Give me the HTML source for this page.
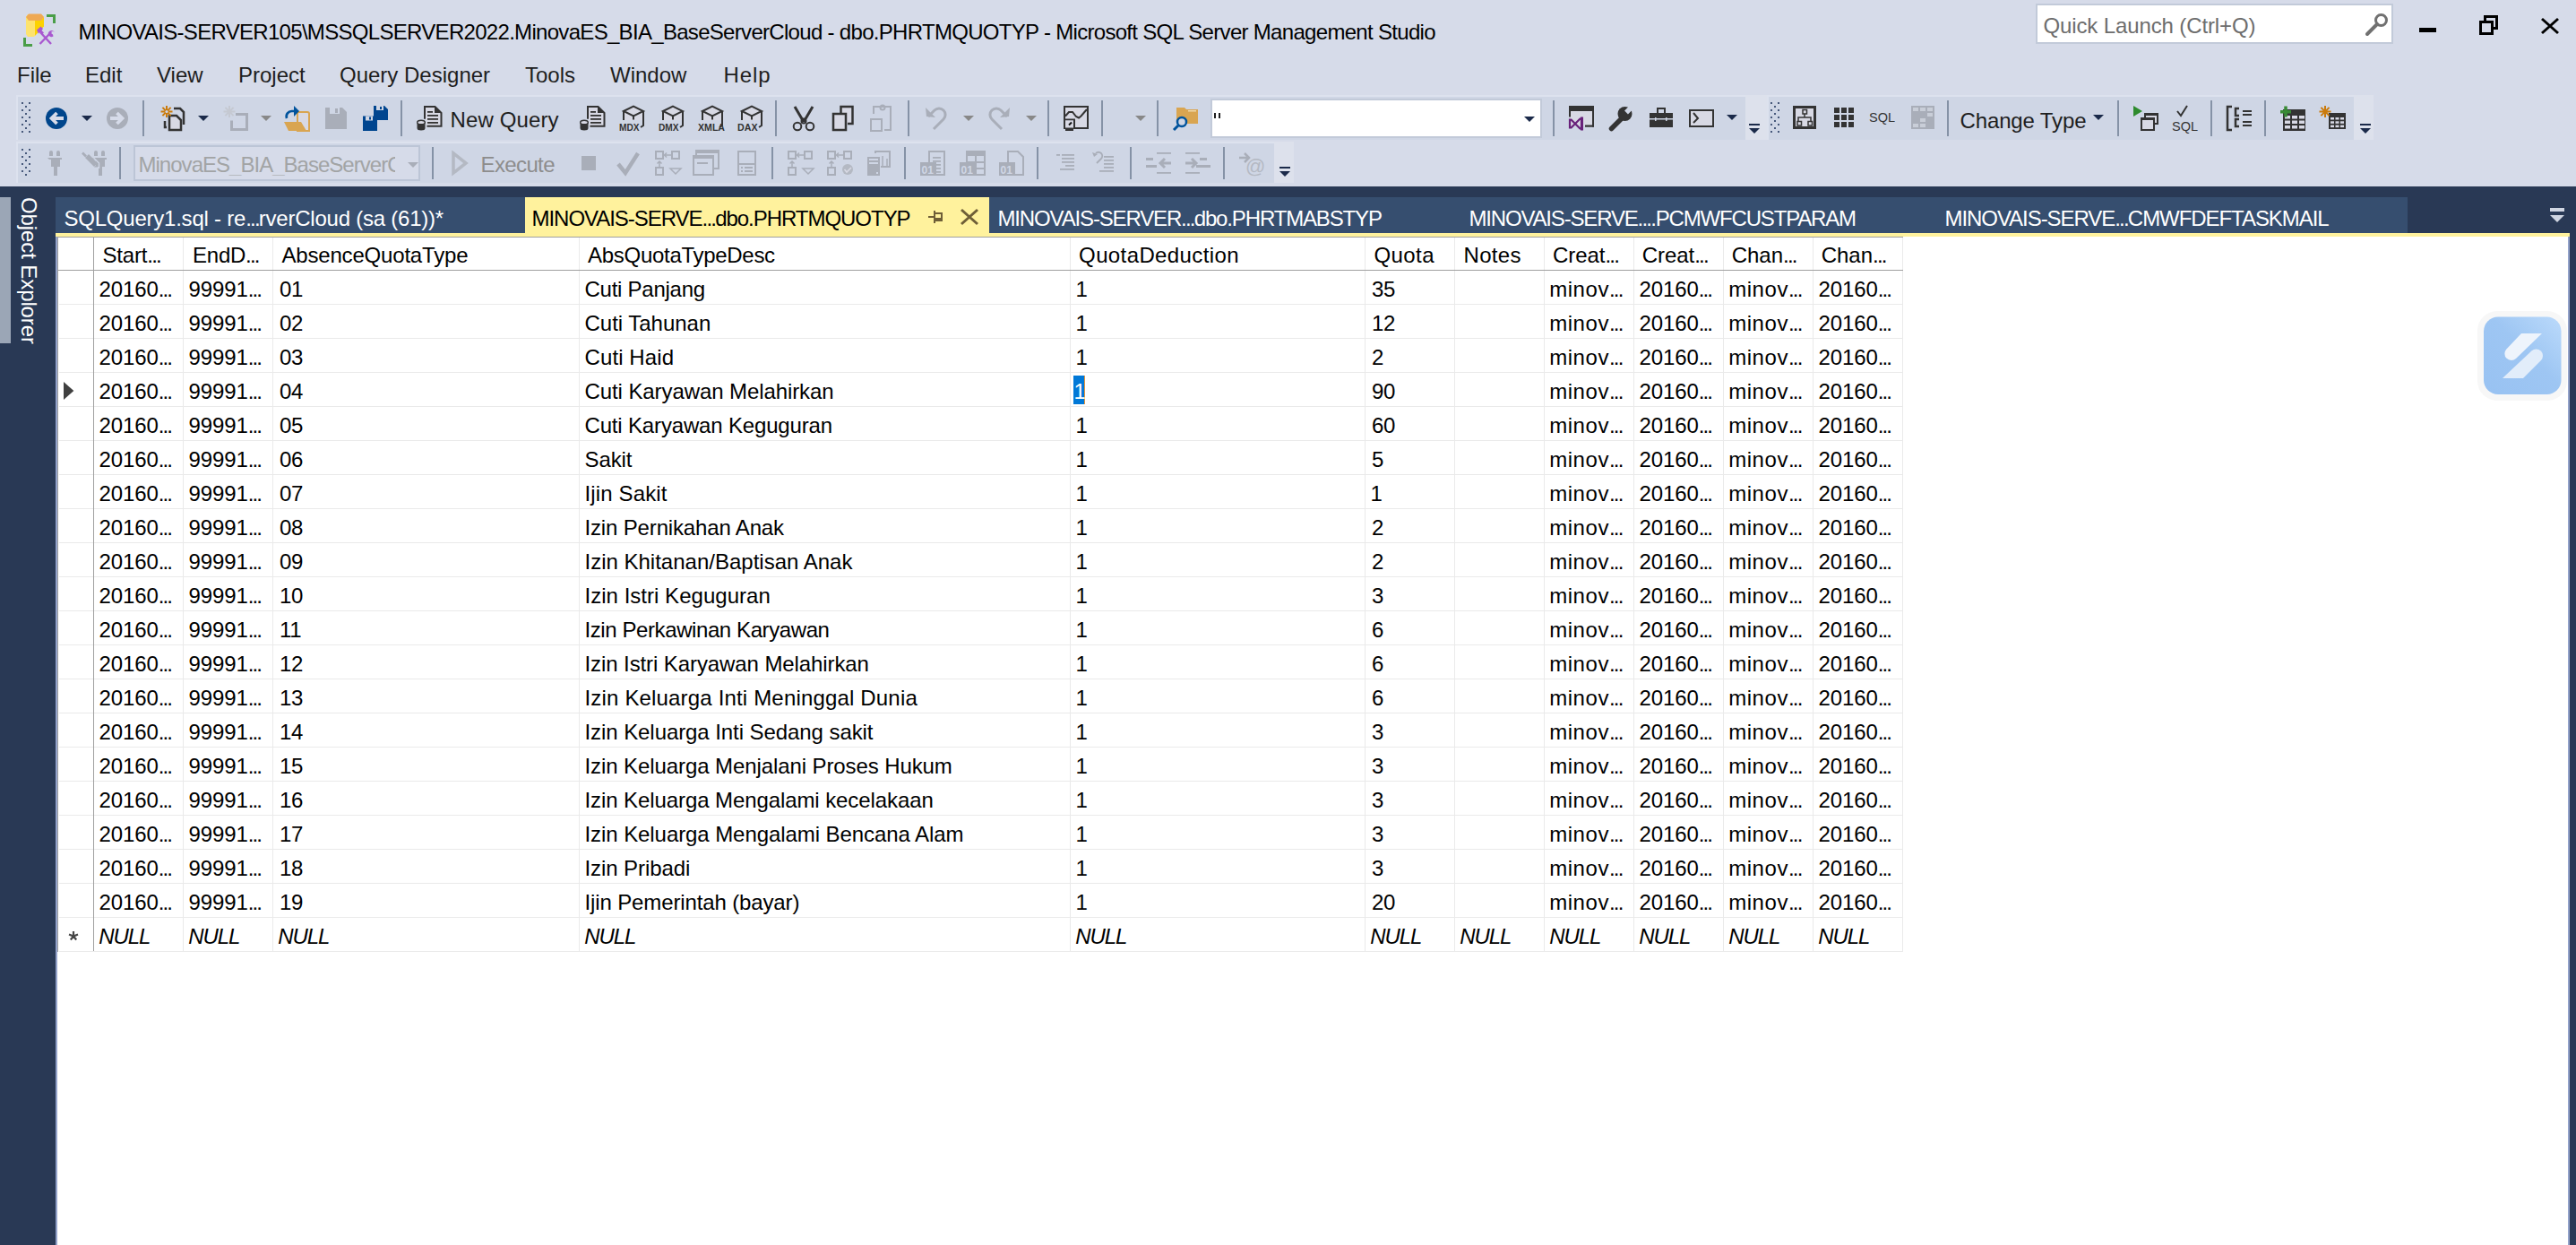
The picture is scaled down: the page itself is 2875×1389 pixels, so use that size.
<!DOCTYPE html>
<html><head><meta charset="utf-8"><title>SSMS</title>
<style>
html,body{margin:0;padding:0}
body{width:2875px;height:1389px;overflow:hidden;position:relative;background:#D6DBE9;font-family:"Liberation Sans",sans-serif}
.t{position:absolute;font-size:24px;line-height:24px;white-space:pre}
.r{position:absolute}
.el{letter-spacing:-1.8px}
</style></head><body>
<!-- toolbar tray -->
<div class=r style="left:18px;top:106px;width:1930px;height:50px;background:#CFD6E5;border-top:2px solid #DDE2EE;border-left:2px solid #DDE2EE;box-sizing:border-box"></div>
<div class=r style="left:1972px;top:106px;width:655px;height:50px;background:#CFD6E5;border-top:2px solid #DDE2EE;border-left:2px solid #DDE2EE;box-sizing:border-box"></div>
<div class=r style="left:18px;top:158px;width:1404px;height:46px;background:#CFD6E5;border-top:2px solid #DDE2EE;border-left:2px solid #DDE2EE;box-sizing:border-box"></div>
<div class=r style="left:1422px;top:158px;width:22px;height:46px;background:#DDE1EC"></div>
<div class=r style="left:1948px;top:106px;width:24px;height:50px;background:#DDE1EC"></div>
<div class=r style="left:2627px;top:106px;width:22px;height:50px;background:#DDE1EC"></div>
<!-- quick launch -->
<div class=r style="left:2272px;top:4px;width:399px;height:45px;background:#FFFFFF;border:2px solid #C2CAD9;box-sizing:border-box"></div>
<!-- combos -->
<div class=r style="left:149px;top:162px;width:320px;height:40px;background:#D6DBE9;border:2px solid #BCC5D6;box-sizing:border-box"></div>
<div class=r style="left:1351px;top:110px;width:370px;height:44px;background:#FFFFFF;border:2px solid #C2CAD9;box-sizing:border-box"></div>
<!-- env -->
<div class=r style="left:0;top:208px;width:2875px;height:1181px;background:#293955"></div>
<div class=r style="left:0;top:220px;width:12px;height:163px;background:#9BA6B6"></div>
<!-- tabs -->
<div class=r style="left:62px;top:220px;width:524px;height:40px;background:#364E6F"></div>
<div class=r style="left:586px;top:220px;width:518px;height:40px;background:#FFF29D"></div>
<div class=r style="left:1104px;top:220px;width:1583px;height:40px;background:#364E6F"></div>
<div class=r style="left:62px;top:260px;width:2806px;height:4px;background:#FFF29D"></div>
<!-- document -->
<div class=r style="left:62px;top:264px;width:2806px;height:1125px;background:#FFFFFF;border-left:2px solid #94A3CB;border-right:2px solid #94A3CB;box-sizing:border-box"></div>
<div style='position:absolute;left:204px;top:264px;width:1px;height:797px;background:#EAEAEA'></div>
<div style='position:absolute;left:304px;top:264px;width:1px;height:797px;background:#EAEAEA'></div>
<div style='position:absolute;left:646px;top:264px;width:1px;height:797px;background:#EAEAEA'></div>
<div style='position:absolute;left:1194px;top:264px;width:1px;height:797px;background:#EAEAEA'></div>
<div style='position:absolute;left:1523px;top:264px;width:1px;height:797px;background:#EAEAEA'></div>
<div style='position:absolute;left:1623px;top:264px;width:1px;height:797px;background:#EAEAEA'></div>
<div style='position:absolute;left:1723px;top:264px;width:1px;height:797px;background:#EAEAEA'></div>
<div style='position:absolute;left:1823px;top:264px;width:1px;height:797px;background:#EAEAEA'></div>
<div style='position:absolute;left:1923px;top:264px;width:1px;height:797px;background:#EAEAEA'></div>
<div style='position:absolute;left:2023px;top:264px;width:1px;height:797px;background:#EAEAEA'></div>
<div style='position:absolute;left:2123px;top:264px;width:1px;height:797px;background:#EAEAEA'></div>
<div style='position:absolute;left:66px;top:339px;width:2058px;height:1px;background:#EAEAEA'></div>
<div style='position:absolute;left:66px;top:377px;width:2058px;height:1px;background:#EAEAEA'></div>
<div style='position:absolute;left:66px;top:415px;width:2058px;height:1px;background:#EAEAEA'></div>
<div style='position:absolute;left:66px;top:453px;width:2058px;height:1px;background:#EAEAEA'></div>
<div style='position:absolute;left:66px;top:491px;width:2058px;height:1px;background:#EAEAEA'></div>
<div style='position:absolute;left:66px;top:529px;width:2058px;height:1px;background:#EAEAEA'></div>
<div style='position:absolute;left:66px;top:567px;width:2058px;height:1px;background:#EAEAEA'></div>
<div style='position:absolute;left:66px;top:605px;width:2058px;height:1px;background:#EAEAEA'></div>
<div style='position:absolute;left:66px;top:643px;width:2058px;height:1px;background:#EAEAEA'></div>
<div style='position:absolute;left:66px;top:681px;width:2058px;height:1px;background:#EAEAEA'></div>
<div style='position:absolute;left:66px;top:719px;width:2058px;height:1px;background:#EAEAEA'></div>
<div style='position:absolute;left:66px;top:757px;width:2058px;height:1px;background:#EAEAEA'></div>
<div style='position:absolute;left:66px;top:795px;width:2058px;height:1px;background:#EAEAEA'></div>
<div style='position:absolute;left:66px;top:833px;width:2058px;height:1px;background:#EAEAEA'></div>
<div style='position:absolute;left:66px;top:871px;width:2058px;height:1px;background:#EAEAEA'></div>
<div style='position:absolute;left:66px;top:909px;width:2058px;height:1px;background:#EAEAEA'></div>
<div style='position:absolute;left:66px;top:947px;width:2058px;height:1px;background:#EAEAEA'></div>
<div style='position:absolute;left:66px;top:985px;width:2058px;height:1px;background:#EAEAEA'></div>
<div style='position:absolute;left:66px;top:1023px;width:2058px;height:1px;background:#EAEAEA'></div>
<div style='position:absolute;left:66px;top:1061px;width:2058px;height:1px;background:#EAEAEA'></div>
<div class=r style="left:65px;top:301px;width:2059px;height:1px;background:#A0A0A0"></div>
<div class=r style="left:64px;top:264px;width:2060px;height:1px;background:#A0A0A0"></div>
<div class=r style="left:104px;top:264px;width:1px;height:797px;background:#A0A0A0"></div>
<div class=r style="left:64px;top:264px;width:1px;height:798px;background:#A0A0A0"></div>
<div class=r style="left:1198px;top:419px;width:13px;height:32px;background:#0078D7"></div><div class=r style="left:1210px;top:419px;width:1px;height:32px;background:#E8963A"></div>
<div class=t style='left:87.5px;top:23.5px;color:#000;letter-spacing:-0.693px;'>MINOVAIS-SERVER105\MSSQLSERVER2022.MinovaES_BIA_BaseServerCloud - dbo.PHRTMQUOTYP - Microsoft SQL Server Management Studio</div>
<div class=t style='left:2280.5px;top:17.0px;color:#6D6D6D;letter-spacing:-0.121px;'>Quick Launch (Ctrl+Q)</div>
<div class=t style='left:19px;top:71.5px;color:#1E1E1E;'>File</div>
<div class=t style='left:95px;top:71.5px;color:#1E1E1E;'>Edit</div>
<div class=t style='left:175px;top:71.5px;color:#1E1E1E;'>View</div>
<div class=t style='left:266px;top:71.5px;color:#1E1E1E;'>Project</div>
<div class=t style='left:379px;top:71.5px;color:#1E1E1E;'>Query Designer</div>
<div class=t style='left:586px;top:71.5px;color:#1E1E1E;'>Tools</div>
<div class=t style='left:681px;top:71.5px;color:#1E1E1E;'>Window</div>
<div class=t style='left:807.5px;top:71.5px;color:#1E1E1E;letter-spacing:0.880px;'>Help</div>
<div class=t style='left:502.5px;top:121.5px;color:#1E1E1E;letter-spacing:0.119px;'>New Query</div>
<div class=t style='left:154.5px;top:171.5px;color:#A2A4A5;letter-spacing:-0.978px;width:286px;overflow:hidden'>MinovaES_BIA_BaseServerC</div>
<div class=t style='left:536.5px;top:171.5px;color:#8D8D8D;letter-spacing:-0.620px;'>Execute</div>
<div class=t style='left:2187.5px;top:123.0px;color:#1E1E1E;letter-spacing:-0.134px;'>Change Type</div>
<div class=t style='left:71.5px;top:232.0px;color:#FFFFFF;letter-spacing:-0.227px;'>SQLQuery1.sql - re<span class=el>...</span>rverCloud (sa (61))*</div>
<div class=t style='left:593.5px;top:232.0px;color:#000000;letter-spacing:-1.034px;'>MINOVAIS-SERVE<span class=el>...</span>dbo.PHRTMQUOTYP</div>
<div class=t style='left:1113.5px;top:232.0px;color:#FFFFFF;letter-spacing:-1.148px;'>MINOVAIS-SERVER<span class=el>...</span>dbo.PHRTMABSTYP</div>
<div class=t style='left:1639.5px;top:232.0px;color:#FFFFFF;letter-spacing:-1.172px;'>MINOVAIS-SERVE<span class=el>...</span>.PCMWFCUSTPARAM</div>
<div class=t style='left:2170.5px;top:232.0px;color:#FFFFFF;letter-spacing:-1.054px;'>MINOVAIS-SERVE<span class=el>...</span>CMWFDEFTASKMAIL</div>
<div class=t style='left:114.5px;top:273.0px;color:#000;letter-spacing:-0.185px;'>Start<span class=el>...</span></div>
<div class=t style='left:215.1px;top:273.0px;color:#000;letter-spacing:-0.276px;'>EndD<span class=el>...</span></div>
<div class=t style='left:314.5px;top:273.0px;color:#000;letter-spacing:-0.188px;'>AbsenceQuotaType</div>
<div class=t style='left:656.1px;top:273.0px;color:#000;letter-spacing:-0.297px;'>AbsQuotaTypeDesc</div>
<div class=t style='left:1204.1px;top:273.0px;color:#000;letter-spacing:0.381px;'>QuotaDeduction</div>
<div class=t style='left:1533.5px;top:273.0px;color:#000;letter-spacing:0.402px;'>Quota</div>
<div class=t style='left:1633.5px;top:273.0px;color:#000;letter-spacing:0.324px;'>Notes</div>
<div class=t style='left:1733.0px;top:273.0px;color:#000;letter-spacing:-0.042px;'>Creat<span class=el>...</span></div>
<div class=t style='left:1832.7px;top:273.0px;color:#000;letter-spacing:-0.042px;'>Creat<span class=el>...</span></div>
<div class=t style='left:1932.7px;top:273.0px;color:#000;'>Chan<span class=el>...</span></div>
<div class=t style='left:2032.7px;top:273.0px;color:#000;'>Chan<span class=el>...</span></div>
<div class=t style='left:110.5px;top:310.5px;color:#000;letter-spacing:-0.123px;'>20160<span class=el>...</span></div>
<div class=t style='left:210.5px;top:310.5px;color:#000;letter-spacing:-0.123px;'>99991<span class=el>...</span></div>
<div class=t style='left:312px;top:310.5px;color:#000;letter-spacing:-0.250px;'>01</div>
<div class=t style='left:652.5px;top:310.5px;color:#000;letter-spacing:-0.253px;'>Cuti Panjang</div>
<div class=t style='left:1200.5px;top:310.5px;color:#000;letter-spacing:-0.250px;'>1</div>
<div class=t style='left:1531px;top:310.5px;color:#000;letter-spacing:-0.250px;'>35</div>
<div class=t style='left:1729.2px;top:310.5px;color:#000;letter-spacing:0.551px;'>minov<span class=el>...</span></div>
<div class=t style='left:1829.5px;top:310.5px;color:#000;letter-spacing:-0.123px;'>20160<span class=el>...</span></div>
<div class=t style='left:1929.2px;top:310.5px;color:#000;letter-spacing:0.551px;'>minov<span class=el>...</span></div>
<div class=t style='left:2029.5px;top:310.5px;color:#000;letter-spacing:-0.123px;'>20160<span class=el>...</span></div>
<div class=t style='left:110.5px;top:348.5px;color:#000;letter-spacing:-0.123px;'>20160<span class=el>...</span></div>
<div class=t style='left:210.5px;top:348.5px;color:#000;letter-spacing:-0.123px;'>99991<span class=el>...</span></div>
<div class=t style='left:312px;top:348.5px;color:#000;letter-spacing:-0.250px;'>02</div>
<div class=t style='left:652.5px;top:348.5px;color:#000;letter-spacing:-0.023px;'>Cuti Tahunan</div>
<div class=t style='left:1200.5px;top:348.5px;color:#000;letter-spacing:-0.250px;'>1</div>
<div class=t style='left:1531px;top:348.5px;color:#000;letter-spacing:-0.250px;'>12</div>
<div class=t style='left:1729.2px;top:348.5px;color:#000;letter-spacing:0.551px;'>minov<span class=el>...</span></div>
<div class=t style='left:1829.5px;top:348.5px;color:#000;letter-spacing:-0.123px;'>20160<span class=el>...</span></div>
<div class=t style='left:1929.2px;top:348.5px;color:#000;letter-spacing:0.551px;'>minov<span class=el>...</span></div>
<div class=t style='left:2029.5px;top:348.5px;color:#000;letter-spacing:-0.123px;'>20160<span class=el>...</span></div>
<div class=t style='left:110.5px;top:386.5px;color:#000;letter-spacing:-0.123px;'>20160<span class=el>...</span></div>
<div class=t style='left:210.5px;top:386.5px;color:#000;letter-spacing:-0.123px;'>99991<span class=el>...</span></div>
<div class=t style='left:312px;top:386.5px;color:#000;letter-spacing:-0.250px;'>03</div>
<div class=t style='left:652.5px;top:386.5px;color:#000;letter-spacing:0.104px;'>Cuti Haid</div>
<div class=t style='left:1200.5px;top:386.5px;color:#000;letter-spacing:-0.250px;'>1</div>
<div class=t style='left:1531px;top:386.5px;color:#000;letter-spacing:-0.250px;'>2</div>
<div class=t style='left:1729.2px;top:386.5px;color:#000;letter-spacing:0.551px;'>minov<span class=el>...</span></div>
<div class=t style='left:1829.5px;top:386.5px;color:#000;letter-spacing:-0.123px;'>20160<span class=el>...</span></div>
<div class=t style='left:1929.2px;top:386.5px;color:#000;letter-spacing:0.551px;'>minov<span class=el>...</span></div>
<div class=t style='left:2029.5px;top:386.5px;color:#000;letter-spacing:-0.123px;'>20160<span class=el>...</span></div>
<div class=t style='left:110.5px;top:424.5px;color:#000;letter-spacing:-0.123px;'>20160<span class=el>...</span></div>
<div class=t style='left:210.5px;top:424.5px;color:#000;letter-spacing:-0.123px;'>99991<span class=el>...</span></div>
<div class=t style='left:312px;top:424.5px;color:#000;letter-spacing:-0.250px;'>04</div>
<div class=t style='left:652.5px;top:424.5px;color:#000;letter-spacing:-0.090px;'>Cuti Karyawan Melahirkan</div>
<div class=t style='left:1198.5px;top:424.5px;color:#FFFFFF;letter-spacing:-0.250px;'>1</div>
<div class=t style='left:1531px;top:424.5px;color:#000;letter-spacing:-0.250px;'>90</div>
<div class=t style='left:1729.2px;top:424.5px;color:#000;letter-spacing:0.551px;'>minov<span class=el>...</span></div>
<div class=t style='left:1829.5px;top:424.5px;color:#000;letter-spacing:-0.123px;'>20160<span class=el>...</span></div>
<div class=t style='left:1929.2px;top:424.5px;color:#000;letter-spacing:0.551px;'>minov<span class=el>...</span></div>
<div class=t style='left:2029.5px;top:424.5px;color:#000;letter-spacing:-0.123px;'>20160<span class=el>...</span></div>
<div class=t style='left:110.5px;top:462.5px;color:#000;letter-spacing:-0.123px;'>20160<span class=el>...</span></div>
<div class=t style='left:210.5px;top:462.5px;color:#000;letter-spacing:-0.123px;'>99991<span class=el>...</span></div>
<div class=t style='left:312px;top:462.5px;color:#000;letter-spacing:-0.250px;'>05</div>
<div class=t style='left:652.5px;top:462.5px;color:#000;letter-spacing:-0.165px;'>Cuti Karyawan Keguguran</div>
<div class=t style='left:1200.5px;top:462.5px;color:#000;letter-spacing:-0.250px;'>1</div>
<div class=t style='left:1531px;top:462.5px;color:#000;letter-spacing:-0.250px;'>60</div>
<div class=t style='left:1729.2px;top:462.5px;color:#000;letter-spacing:0.551px;'>minov<span class=el>...</span></div>
<div class=t style='left:1829.5px;top:462.5px;color:#000;letter-spacing:-0.123px;'>20160<span class=el>...</span></div>
<div class=t style='left:1929.2px;top:462.5px;color:#000;letter-spacing:0.551px;'>minov<span class=el>...</span></div>
<div class=t style='left:2029.5px;top:462.5px;color:#000;letter-spacing:-0.123px;'>20160<span class=el>...</span></div>
<div class=t style='left:110.5px;top:500.5px;color:#000;letter-spacing:-0.123px;'>20160<span class=el>...</span></div>
<div class=t style='left:210.5px;top:500.5px;color:#000;letter-spacing:-0.123px;'>99991<span class=el>...</span></div>
<div class=t style='left:312px;top:500.5px;color:#000;letter-spacing:-0.250px;'>06</div>
<div class=t style='left:652.5px;top:500.5px;color:#000;letter-spacing:-0.102px;'>Sakit</div>
<div class=t style='left:1200.5px;top:500.5px;color:#000;letter-spacing:-0.250px;'>1</div>
<div class=t style='left:1531px;top:500.5px;color:#000;letter-spacing:-0.250px;'>5</div>
<div class=t style='left:1729.2px;top:500.5px;color:#000;letter-spacing:0.551px;'>minov<span class=el>...</span></div>
<div class=t style='left:1829.5px;top:500.5px;color:#000;letter-spacing:-0.123px;'>20160<span class=el>...</span></div>
<div class=t style='left:1929.2px;top:500.5px;color:#000;letter-spacing:0.551px;'>minov<span class=el>...</span></div>
<div class=t style='left:2029.5px;top:500.5px;color:#000;letter-spacing:-0.123px;'>20160<span class=el>...</span></div>
<div class=t style='left:110.5px;top:538.5px;color:#000;letter-spacing:-0.123px;'>20160<span class=el>...</span></div>
<div class=t style='left:210.5px;top:538.5px;color:#000;letter-spacing:-0.123px;'>99991<span class=el>...</span></div>
<div class=t style='left:312px;top:538.5px;color:#000;letter-spacing:-0.250px;'>07</div>
<div class=t style='left:652.5px;top:538.5px;color:#000;letter-spacing:0.139px;'>Ijin Sakit</div>
<div class=t style='left:1200.5px;top:538.5px;color:#000;letter-spacing:-0.250px;'>1</div>
<div class=t style='left:1529.5px;top:538.5px;color:#000;letter-spacing:-0.250px;'>1</div>
<div class=t style='left:1729.2px;top:538.5px;color:#000;letter-spacing:0.551px;'>minov<span class=el>...</span></div>
<div class=t style='left:1829.5px;top:538.5px;color:#000;letter-spacing:-0.123px;'>20160<span class=el>...</span></div>
<div class=t style='left:1929.2px;top:538.5px;color:#000;letter-spacing:0.551px;'>minov<span class=el>...</span></div>
<div class=t style='left:2029.5px;top:538.5px;color:#000;letter-spacing:-0.123px;'>20160<span class=el>...</span></div>
<div class=t style='left:110.5px;top:576.5px;color:#000;letter-spacing:-0.123px;'>20160<span class=el>...</span></div>
<div class=t style='left:210.5px;top:576.5px;color:#000;letter-spacing:-0.123px;'>99991<span class=el>...</span></div>
<div class=t style='left:312px;top:576.5px;color:#000;letter-spacing:-0.250px;'>08</div>
<div class=t style='left:652.5px;top:576.5px;color:#000;letter-spacing:-0.154px;'>Izin Pernikahan Anak</div>
<div class=t style='left:1200.5px;top:576.5px;color:#000;letter-spacing:-0.250px;'>1</div>
<div class=t style='left:1531px;top:576.5px;color:#000;letter-spacing:-0.250px;'>2</div>
<div class=t style='left:1729.2px;top:576.5px;color:#000;letter-spacing:0.551px;'>minov<span class=el>...</span></div>
<div class=t style='left:1829.5px;top:576.5px;color:#000;letter-spacing:-0.123px;'>20160<span class=el>...</span></div>
<div class=t style='left:1929.2px;top:576.5px;color:#000;letter-spacing:0.551px;'>minov<span class=el>...</span></div>
<div class=t style='left:2029.5px;top:576.5px;color:#000;letter-spacing:-0.123px;'>20160<span class=el>...</span></div>
<div class=t style='left:110.5px;top:614.5px;color:#000;letter-spacing:-0.123px;'>20160<span class=el>...</span></div>
<div class=t style='left:210.5px;top:614.5px;color:#000;letter-spacing:-0.123px;'>99991<span class=el>...</span></div>
<div class=t style='left:312px;top:614.5px;color:#000;letter-spacing:-0.250px;'>09</div>
<div class=t style='left:652.5px;top:614.5px;color:#000;'>Izin Khitanan/Baptisan Anak</div>
<div class=t style='left:1200.5px;top:614.5px;color:#000;letter-spacing:-0.250px;'>1</div>
<div class=t style='left:1531px;top:614.5px;color:#000;letter-spacing:-0.250px;'>2</div>
<div class=t style='left:1729.2px;top:614.5px;color:#000;letter-spacing:0.551px;'>minov<span class=el>...</span></div>
<div class=t style='left:1829.5px;top:614.5px;color:#000;letter-spacing:-0.123px;'>20160<span class=el>...</span></div>
<div class=t style='left:1929.2px;top:614.5px;color:#000;letter-spacing:0.551px;'>minov<span class=el>...</span></div>
<div class=t style='left:2029.5px;top:614.5px;color:#000;letter-spacing:-0.123px;'>20160<span class=el>...</span></div>
<div class=t style='left:110.5px;top:652.5px;color:#000;letter-spacing:-0.123px;'>20160<span class=el>...</span></div>
<div class=t style='left:210.5px;top:652.5px;color:#000;letter-spacing:-0.123px;'>99991<span class=el>...</span></div>
<div class=t style='left:312px;top:652.5px;color:#000;letter-spacing:-0.250px;'>10</div>
<div class=t style='left:652.5px;top:652.5px;color:#000;letter-spacing:0.025px;'>Izin Istri Keguguran</div>
<div class=t style='left:1200.5px;top:652.5px;color:#000;letter-spacing:-0.250px;'>1</div>
<div class=t style='left:1531px;top:652.5px;color:#000;letter-spacing:-0.250px;'>3</div>
<div class=t style='left:1729.2px;top:652.5px;color:#000;letter-spacing:0.551px;'>minov<span class=el>...</span></div>
<div class=t style='left:1829.5px;top:652.5px;color:#000;letter-spacing:-0.123px;'>20160<span class=el>...</span></div>
<div class=t style='left:1929.2px;top:652.5px;color:#000;letter-spacing:0.551px;'>minov<span class=el>...</span></div>
<div class=t style='left:2029.5px;top:652.5px;color:#000;letter-spacing:-0.123px;'>20160<span class=el>...</span></div>
<div class=t style='left:110.5px;top:690.5px;color:#000;letter-spacing:-0.123px;'>20160<span class=el>...</span></div>
<div class=t style='left:210.5px;top:690.5px;color:#000;letter-spacing:-0.123px;'>99991<span class=el>...</span></div>
<div class=t style='left:312px;top:690.5px;color:#000;letter-spacing:-0.250px;'>11</div>
<div class=t style='left:652.5px;top:690.5px;color:#000;letter-spacing:-0.407px;'>Izin Perkawinan Karyawan</div>
<div class=t style='left:1200.5px;top:690.5px;color:#000;letter-spacing:-0.250px;'>1</div>
<div class=t style='left:1531px;top:690.5px;color:#000;letter-spacing:-0.250px;'>6</div>
<div class=t style='left:1729.2px;top:690.5px;color:#000;letter-spacing:0.551px;'>minov<span class=el>...</span></div>
<div class=t style='left:1829.5px;top:690.5px;color:#000;letter-spacing:-0.123px;'>20160<span class=el>...</span></div>
<div class=t style='left:1929.2px;top:690.5px;color:#000;letter-spacing:0.551px;'>minov<span class=el>...</span></div>
<div class=t style='left:2029.5px;top:690.5px;color:#000;letter-spacing:-0.123px;'>20160<span class=el>...</span></div>
<div class=t style='left:110.5px;top:728.5px;color:#000;letter-spacing:-0.123px;'>20160<span class=el>...</span></div>
<div class=t style='left:210.5px;top:728.5px;color:#000;letter-spacing:-0.123px;'>99991<span class=el>...</span></div>
<div class=t style='left:312px;top:728.5px;color:#000;letter-spacing:-0.250px;'>12</div>
<div class=t style='left:652.5px;top:728.5px;color:#000;letter-spacing:-0.092px;'>Izin Istri Karyawan Melahirkan</div>
<div class=t style='left:1200.5px;top:728.5px;color:#000;letter-spacing:-0.250px;'>1</div>
<div class=t style='left:1531px;top:728.5px;color:#000;letter-spacing:-0.250px;'>6</div>
<div class=t style='left:1729.2px;top:728.5px;color:#000;letter-spacing:0.551px;'>minov<span class=el>...</span></div>
<div class=t style='left:1829.5px;top:728.5px;color:#000;letter-spacing:-0.123px;'>20160<span class=el>...</span></div>
<div class=t style='left:1929.2px;top:728.5px;color:#000;letter-spacing:0.551px;'>minov<span class=el>...</span></div>
<div class=t style='left:2029.5px;top:728.5px;color:#000;letter-spacing:-0.123px;'>20160<span class=el>...</span></div>
<div class=t style='left:110.5px;top:766.5px;color:#000;letter-spacing:-0.123px;'>20160<span class=el>...</span></div>
<div class=t style='left:210.5px;top:766.5px;color:#000;letter-spacing:-0.123px;'>99991<span class=el>...</span></div>
<div class=t style='left:312px;top:766.5px;color:#000;letter-spacing:-0.250px;'>13</div>
<div class=t style='left:652.5px;top:766.5px;color:#000;letter-spacing:0.172px;'>Izin Keluarga Inti Meninggal Dunia</div>
<div class=t style='left:1200.5px;top:766.5px;color:#000;letter-spacing:-0.250px;'>1</div>
<div class=t style='left:1531px;top:766.5px;color:#000;letter-spacing:-0.250px;'>6</div>
<div class=t style='left:1729.2px;top:766.5px;color:#000;letter-spacing:0.551px;'>minov<span class=el>...</span></div>
<div class=t style='left:1829.5px;top:766.5px;color:#000;letter-spacing:-0.123px;'>20160<span class=el>...</span></div>
<div class=t style='left:1929.2px;top:766.5px;color:#000;letter-spacing:0.551px;'>minov<span class=el>...</span></div>
<div class=t style='left:2029.5px;top:766.5px;color:#000;letter-spacing:-0.123px;'>20160<span class=el>...</span></div>
<div class=t style='left:110.5px;top:804.5px;color:#000;letter-spacing:-0.123px;'>20160<span class=el>...</span></div>
<div class=t style='left:210.5px;top:804.5px;color:#000;letter-spacing:-0.123px;'>99991<span class=el>...</span></div>
<div class=t style='left:312px;top:804.5px;color:#000;letter-spacing:-0.250px;'>14</div>
<div class=t style='left:652.5px;top:804.5px;color:#000;letter-spacing:-0.072px;'>Izin Keluarga Inti Sedang sakit</div>
<div class=t style='left:1200.5px;top:804.5px;color:#000;letter-spacing:-0.250px;'>1</div>
<div class=t style='left:1531px;top:804.5px;color:#000;letter-spacing:-0.250px;'>3</div>
<div class=t style='left:1729.2px;top:804.5px;color:#000;letter-spacing:0.551px;'>minov<span class=el>...</span></div>
<div class=t style='left:1829.5px;top:804.5px;color:#000;letter-spacing:-0.123px;'>20160<span class=el>...</span></div>
<div class=t style='left:1929.2px;top:804.5px;color:#000;letter-spacing:0.551px;'>minov<span class=el>...</span></div>
<div class=t style='left:2029.5px;top:804.5px;color:#000;letter-spacing:-0.123px;'>20160<span class=el>...</span></div>
<div class=t style='left:110.5px;top:842.5px;color:#000;letter-spacing:-0.123px;'>20160<span class=el>...</span></div>
<div class=t style='left:210.5px;top:842.5px;color:#000;letter-spacing:-0.123px;'>99991<span class=el>...</span></div>
<div class=t style='left:312px;top:842.5px;color:#000;letter-spacing:-0.250px;'>15</div>
<div class=t style='left:652.5px;top:842.5px;color:#000;letter-spacing:-0.091px;'>Izin Keluarga Menjalani Proses Hukum</div>
<div class=t style='left:1200.5px;top:842.5px;color:#000;letter-spacing:-0.250px;'>1</div>
<div class=t style='left:1531px;top:842.5px;color:#000;letter-spacing:-0.250px;'>3</div>
<div class=t style='left:1729.2px;top:842.5px;color:#000;letter-spacing:0.551px;'>minov<span class=el>...</span></div>
<div class=t style='left:1829.5px;top:842.5px;color:#000;letter-spacing:-0.123px;'>20160<span class=el>...</span></div>
<div class=t style='left:1929.2px;top:842.5px;color:#000;letter-spacing:0.551px;'>minov<span class=el>...</span></div>
<div class=t style='left:2029.5px;top:842.5px;color:#000;letter-spacing:-0.123px;'>20160<span class=el>...</span></div>
<div class=t style='left:110.5px;top:880.5px;color:#000;letter-spacing:-0.123px;'>20160<span class=el>...</span></div>
<div class=t style='left:210.5px;top:880.5px;color:#000;letter-spacing:-0.123px;'>99991<span class=el>...</span></div>
<div class=t style='left:312px;top:880.5px;color:#000;letter-spacing:-0.250px;'>16</div>
<div class=t style='left:652.5px;top:880.5px;color:#000;letter-spacing:-0.090px;'>Izin Keluarga Mengalami kecelakaan</div>
<div class=t style='left:1200.5px;top:880.5px;color:#000;letter-spacing:-0.250px;'>1</div>
<div class=t style='left:1531px;top:880.5px;color:#000;letter-spacing:-0.250px;'>3</div>
<div class=t style='left:1729.2px;top:880.5px;color:#000;letter-spacing:0.551px;'>minov<span class=el>...</span></div>
<div class=t style='left:1829.5px;top:880.5px;color:#000;letter-spacing:-0.123px;'>20160<span class=el>...</span></div>
<div class=t style='left:1929.2px;top:880.5px;color:#000;letter-spacing:0.551px;'>minov<span class=el>...</span></div>
<div class=t style='left:2029.5px;top:880.5px;color:#000;letter-spacing:-0.123px;'>20160<span class=el>...</span></div>
<div class=t style='left:110.5px;top:918.5px;color:#000;letter-spacing:-0.123px;'>20160<span class=el>...</span></div>
<div class=t style='left:210.5px;top:918.5px;color:#000;letter-spacing:-0.123px;'>99991<span class=el>...</span></div>
<div class=t style='left:312px;top:918.5px;color:#000;letter-spacing:-0.250px;'>17</div>
<div class=t style='left:652.5px;top:918.5px;color:#000;letter-spacing:-0.075px;'>Izin Keluarga Mengalami Bencana Alam</div>
<div class=t style='left:1200.5px;top:918.5px;color:#000;letter-spacing:-0.250px;'>1</div>
<div class=t style='left:1531px;top:918.5px;color:#000;letter-spacing:-0.250px;'>3</div>
<div class=t style='left:1729.2px;top:918.5px;color:#000;letter-spacing:0.551px;'>minov<span class=el>...</span></div>
<div class=t style='left:1829.5px;top:918.5px;color:#000;letter-spacing:-0.123px;'>20160<span class=el>...</span></div>
<div class=t style='left:1929.2px;top:918.5px;color:#000;letter-spacing:0.551px;'>minov<span class=el>...</span></div>
<div class=t style='left:2029.5px;top:918.5px;color:#000;letter-spacing:-0.123px;'>20160<span class=el>...</span></div>
<div class=t style='left:110.5px;top:956.5px;color:#000;letter-spacing:-0.123px;'>20160<span class=el>...</span></div>
<div class=t style='left:210.5px;top:956.5px;color:#000;letter-spacing:-0.123px;'>99991<span class=el>...</span></div>
<div class=t style='left:312px;top:956.5px;color:#000;letter-spacing:-0.250px;'>18</div>
<div class=t style='left:652.5px;top:956.5px;color:#000;letter-spacing:-0.080px;'>Izin Pribadi</div>
<div class=t style='left:1200.5px;top:956.5px;color:#000;letter-spacing:-0.250px;'>1</div>
<div class=t style='left:1531px;top:956.5px;color:#000;letter-spacing:-0.250px;'>3</div>
<div class=t style='left:1729.2px;top:956.5px;color:#000;letter-spacing:0.551px;'>minov<span class=el>...</span></div>
<div class=t style='left:1829.5px;top:956.5px;color:#000;letter-spacing:-0.123px;'>20160<span class=el>...</span></div>
<div class=t style='left:1929.2px;top:956.5px;color:#000;letter-spacing:0.551px;'>minov<span class=el>...</span></div>
<div class=t style='left:2029.5px;top:956.5px;color:#000;letter-spacing:-0.123px;'>20160<span class=el>...</span></div>
<div class=t style='left:110.5px;top:994.5px;color:#000;letter-spacing:-0.123px;'>20160<span class=el>...</span></div>
<div class=t style='left:210.5px;top:994.5px;color:#000;letter-spacing:-0.123px;'>99991<span class=el>...</span></div>
<div class=t style='left:312px;top:994.5px;color:#000;letter-spacing:-0.250px;'>19</div>
<div class=t style='left:652.5px;top:994.5px;color:#000;letter-spacing:-0.128px;'>Ijin Pemerintah (bayar)</div>
<div class=t style='left:1200.5px;top:994.5px;color:#000;letter-spacing:-0.250px;'>1</div>
<div class=t style='left:1531px;top:994.5px;color:#000;letter-spacing:-0.250px;'>20</div>
<div class=t style='left:1729.2px;top:994.5px;color:#000;letter-spacing:0.551px;'>minov<span class=el>...</span></div>
<div class=t style='left:1829.5px;top:994.5px;color:#000;letter-spacing:-0.123px;'>20160<span class=el>...</span></div>
<div class=t style='left:1929.2px;top:994.5px;color:#000;letter-spacing:0.551px;'>minov<span class=el>...</span></div>
<div class=t style='left:2029.5px;top:994.5px;color:#000;letter-spacing:-0.123px;'>20160<span class=el>...</span></div>
<div class=t style='left:110.3px;top:1032.5px;color:#000;font-style:italic;letter-spacing:-1.120px;'>NULL</div>
<div class=t style='left:210.3px;top:1032.5px;color:#000;font-style:italic;letter-spacing:-1.120px;'>NULL</div>
<div class=t style='left:310.3px;top:1032.5px;color:#000;font-style:italic;letter-spacing:-1.120px;'>NULL</div>
<div class=t style='left:652.3px;top:1032.5px;color:#000;font-style:italic;letter-spacing:-1.120px;'>NULL</div>
<div class=t style='left:1200.3px;top:1032.5px;color:#000;font-style:italic;letter-spacing:-1.120px;'>NULL</div>
<div class=t style='left:1529.3px;top:1032.5px;color:#000;font-style:italic;letter-spacing:-1.120px;'>NULL</div>
<div class=t style='left:1629.3px;top:1032.5px;color:#000;font-style:italic;letter-spacing:-1.120px;'>NULL</div>
<div class=t style='left:1729.3px;top:1032.5px;color:#000;font-style:italic;letter-spacing:-1.120px;'>NULL</div>
<div class=t style='left:1829.3px;top:1032.5px;color:#000;font-style:italic;letter-spacing:-1.120px;'>NULL</div>
<div class=t style='left:1929.3px;top:1032.5px;color:#000;font-style:italic;letter-spacing:-1.120px;'>NULL</div>
<div class=t style='left:2029.3px;top:1032.5px;color:#000;font-style:italic;letter-spacing:-1.120px;'>NULL</div>
<div class=t style="left:20px;top:220px;color:#fff;transform-origin:0 0;transform:translate(24px,0) rotate(90deg);letter-spacing:-0.1px">Object Explorer</div>
<svg width='2875' height='1389' style='position:absolute;left:0;top:0'><g><path d='M29 19 L31 16 L46 16 L49 19 L49 38 L46 41 L31 41 L29 38Z' fill='#FDE36E'/><path d='M39 22 L46 22 L49 19 L49 38 L46 41 L39 41Z' fill='#FCD200'/><path d='M29 19 L32 15.5 L46 15.5 L49 19 L46 23 L32 23Z' fill='#EFA954'/><path d='M52 16h10v10h-3v-7h-7z' fill='#4A9E48'/><path d='M26 42h3v7h7v3h-10z' fill='#4A9E48'/><path d='M37.5 41.5 L49.5 29 L53 33 L45 46 L40 46Z' fill='#D6DBE9'/><path d='M45 36 L57 49 M57 36 L44.5 49' stroke='#A958D0' stroke-width='2.4'/><path d='M41 33.5 L45.5 29.5 L48 32 L46.5 34 L49 36.5 L47 38.5 L44.5 36 L43 37.5Z' fill='#A958D0'/><path d='M54.5 35.5 a3.6 3.6 0 0 0 5 5 l-0.5 -2 -1.8 -1.2 0.2 -2 2 -0.3 1.5 1.3 a3.6 3.6 0 0 0 -6.4 -0.8z' fill='#A958D0'/></g><circle cx='2657.5' cy='22.5' r='6' fill='none' stroke='#717171' stroke-width='3'/><path d='M2653 27 L2642 38' stroke='#717171' stroke-width='4' stroke-linecap='round'/><rect x='2700' y='31' width='19' height='5' fill='#000'/><path d='M2768.5 24.5h13v13h-13z M2773.5 24.5v-6h13v13h-5' fill='none' stroke='#000' stroke-width='3'/><path d='M2837 21 L2855 37 M2855 21 L2837 37' stroke='#000' stroke-width='3'/><rect x='24' y='114' width='2' height='2' fill='#46587A'/><rect x='32' y='114' width='2' height='2' fill='#46587A'/><rect x='28' y='118' width='2' height='2' fill='#46587A'/><rect x='24' y='122' width='2' height='2' fill='#46587A'/><rect x='32' y='122' width='2' height='2' fill='#46587A'/><rect x='28' y='126' width='2' height='2' fill='#46587A'/><rect x='24' y='130' width='2' height='2' fill='#46587A'/><rect x='32' y='130' width='2' height='2' fill='#46587A'/><rect x='28' y='134' width='2' height='2' fill='#46587A'/><rect x='24' y='138' width='2' height='2' fill='#46587A'/><rect x='32' y='138' width='2' height='2' fill='#46587A'/><rect x='28' y='142' width='2' height='2' fill='#46587A'/><rect x='24' y='146' width='2' height='2' fill='#46587A'/><rect x='32' y='146' width='2' height='2' fill='#46587A'/><circle cx='63' cy='132' r='12' fill='#00468C'/><path d='M63.5 126 L57.5 132 L63.5 138 M58.5 132 H71' fill='none' stroke='#D6DBE9' stroke-width='3.8'/><path d='M91 129h12l-6 6z' fill='#1B2A4A'/><circle cx='131' cy='132' r='12' fill='#A9AEB9'/><path d='M130.5 126 L136.5 132 L130.5 138 M135.5 132 H123' fill='none' stroke='#D6DBE9' stroke-width='3.8'/><rect x='159' y='112' width='2' height='40' fill='#8592A6'/><path d='M194 121h7l4 4v14' fill='none' stroke='#333' stroke-width='2.5'/><path d='M189 129h8l5 5v11h-13z' fill='#D8D9E4' stroke='#333' stroke-width='2.5'/><path d='M184 135v7h2' fill='none' stroke='#333' stroke-width='2.5'/><path d='M186 118v13 M179.5 124.5h13 M181.4 119.9l9.2 9.2 M190.6 119.9l-9.2 9.2' stroke='#CA7A0B' stroke-width='2'/><circle cx='186' cy='124.5' r='1.6' fill='#CFD6E5'/><path d='M221 129h12l-6 6z' fill='#1B2A4A'/><path d='M256 118v13 M249.5 124.5h13 M251.4 119.9l9.2 9.2 M260.6 119.9l-9.2 9.2' stroke='#C5C9D2' stroke-width='2'/><path d='M263 127.5h12.5v17h-17v-10' fill='none' stroke='#A9AEB9' stroke-width='3'/><path d='M291 129h12l-6 6z' fill='#888888'/><path d='M332 125h11a2 2 0 0 1 2 2v19h-13z' fill='#D8D9E4' stroke='#D9A551' stroke-width='2'/><path d='M317 136h19l6 10h-20z' fill='#D9A551'/><path d='M320 132 a6 6 0 0 1 6-8 h5' fill='none' stroke='#00539C' stroke-width='2.6'/><path d='M328 118l6 6-6 6z' fill='#00539C'/><path d='M363 120h19l5 5v19h-24z' fill='#A9AEB9'/><rect x='368' y='120' width='11' height='7' fill='#CFD6E5'/><rect x='374' y='121' width='3' height='5' fill='#A9AEB9'/><path d='M417 118h12l4 4v12h-16z' fill='#00458F'/><rect x='420' y='118' width='8' height='5' fill='#CFD6E5'/><rect x='424' y='119' width='2' height='3' fill='#00458F'/><path d='M405 129.5h12l4 4v12.5h-16z' fill='#00458F'/><rect x='408' y='129.5' width='8' height='5' fill='#CFD6E5'/><rect x='412' y='130.5' width='2' height='3' fill='#00458F'/><rect x='447' y='112' width='2' height='40' fill='#8592A6'/><path d='M474 119h11.5l7 7v15.7h-17v-8.5h-1.5z' fill='#D8D9E4'/><path d='M474 132.7v-13.7h11.5l7 7v14.7h-16' fill='none' stroke='#333' stroke-width='2'/><path d='M485 118l8 8h-8z' fill='#333'/><rect x='477' y='124' width='6' height='1.8' fill='#333'/><rect x='477' y='128' width='12' height='1.8' fill='#333'/><rect x='477' y='132' width='12' height='1.8' fill='#333'/><rect x='477' y='136' width='12' height='1.8' fill='#333'/><path d='M465.5 136.5v6.5a4.5 2.5 0 0 0 9 0v-6.5z' fill='#333'/><ellipse cx='470' cy='136.5' rx='4.3' ry='2.3' fill='#D8D9E4' stroke='#333' stroke-width='1.4'/><path d='M656 119h11.5l7 7v15.7h-17v-8.5h-1.5z' fill='#D8D9E4'/><path d='M656 132.7v-13.7h11.5l7 7v14.7h-16' fill='none' stroke='#333' stroke-width='2'/><path d='M667 118l8 8h-8z' fill='#333'/><rect x='659' y='124' width='6' height='1.8' fill='#333'/><rect x='659' y='128' width='12' height='1.8' fill='#333'/><rect x='659' y='132' width='12' height='1.8' fill='#333'/><rect x='659' y='136' width='12' height='1.8' fill='#333'/><path d='M647.5 136.5v6.5a4.5 2.5 0 0 0 9 0v-6.5z' fill='#333'/><ellipse cx='652' cy='136.5' rx='4.3' ry='2.3' fill='#D8D9E4' stroke='#333' stroke-width='1.4'/><path d='M696 124 L707 118.5 L718 124 L718 134 L696 134Z' fill='#D8D9E4'/><path d='M696 124 L707 118.5 L718 124 L707 129.5Z' fill='none' stroke='#333' stroke-width='2'/><path d='M696 124v10 M718 124v16l-3 2 M707 129.5v4' fill='none' stroke='#333' stroke-width='2'/><text x='691' y='145.5' font-family='Liberation Sans' font-weight='bold' font-size='11.5' fill='#333' textLength='22.5' lengthAdjust='spacingAndGlyphs'>MDX</text><path d='M740 124 L751 118.5 L762 124 L762 134 L740 134Z' fill='#D8D9E4'/><path d='M740 124 L751 118.5 L762 124 L751 129.5Z' fill='none' stroke='#333' stroke-width='2'/><path d='M740 124v10 M762 124v16l-3 2 M751 129.5v4' fill='none' stroke='#333' stroke-width='2'/><text x='735' y='145.5' font-family='Liberation Sans' font-weight='bold' font-size='11.5' fill='#333' textLength='22.5' lengthAdjust='spacingAndGlyphs'>DMX</text><path d='M784 124 L795 118.5 L806 124 L806 134 L784 134Z' fill='#D8D9E4'/><path d='M784 124 L795 118.5 L806 124 L795 129.5Z' fill='none' stroke='#333' stroke-width='2'/><path d='M784 124v10 M806 124v16l-3 2 M795 129.5v4' fill='none' stroke='#333' stroke-width='2'/><text x='779' y='145.5' font-family='Liberation Sans' font-weight='bold' font-size='11.5' fill='#333' textLength='30.0' lengthAdjust='spacingAndGlyphs'>XMLA</text><path d='M828 124 L839 118.5 L850 124 L850 134 L828 134Z' fill='#D8D9E4'/><path d='M828 124 L839 118.5 L850 124 L839 129.5Z' fill='none' stroke='#333' stroke-width='2'/><path d='M828 124v10 M850 124v16l-3 2 M839 129.5v4' fill='none' stroke='#333' stroke-width='2'/><text x='823' y='145.5' font-family='Liberation Sans' font-weight='bold' font-size='11.5' fill='#333' textLength='22.5' lengthAdjust='spacingAndGlyphs'>DAX</text><rect x='865' y='112' width='2' height='40' fill='#8592A6'/><path d='M887 119 L897 136 M907 119 L897 136' stroke='#333' stroke-width='3'/><circle cx='897' cy='135' r='2.5' fill='none' stroke='#333' stroke-width='2'/><circle cx='890' cy='141' r='4.3' fill='none' stroke='#333' stroke-width='2'/><circle cx='904' cy='141' r='4.3' fill='none' stroke='#333' stroke-width='2'/><path d='M938.5 126v-7h13v19h-5.5' fill='#D8D9E4' stroke='#333' stroke-width='2.5'/><rect x='930' y='127' width='14' height='18' fill='#D8D9E4' stroke='#333' stroke-width='2.5'/><path d='M975 127v-8h19v26h-7' fill='none' stroke='#A9AEB9' stroke-width='2'/><circle cx='985' cy='120' r='2.5' fill='none' stroke='#A9AEB9' stroke-width='2'/><rect x='972' y='133' width='12' height='13' fill='none' stroke='#A9AEB9' stroke-width='2'/><rect x='1013' y='112' width='2' height='40' fill='#8592A6'/><path d='M1042 144 L1053 133 a7 7 0 0 0 -10 -10 L1036 130' fill='none' stroke='#A9AEB9' stroke-width='3'/><path d='M1033 120 L1034 130 L1044 131Z' fill='#A9AEB9'/><path d='M1075 129h12l-6 6z' fill='#888888'/><path d='M1118 144 L1107 133 a7 7 0 0 1 10 -10 L1124 130' fill='none' stroke='#A9AEB9' stroke-width='3'/><path d='M1127 120 L1126 130 L1116 131Z' fill='#A9AEB9'/><path d='M1145 129h12l-6 6z' fill='#888888'/><rect x='1169' y='112' width='2' height='40' fill='#8592A6'/><rect x='1188' y='119' width='26' height='24' fill='#D8D9E4' stroke='#333' stroke-width='2'/><polyline points='1189,129.5 1193,125 1197,125 1201,130 1204,131.5 1206.5,129.5 1213,122' fill='none' stroke='#333' stroke-width='2'/><path d='M1188 133.5h11v10' fill='#D8D9E4' stroke='#333' stroke-width='2'/><rect x='1189' y='134.5' width='9' height='8' fill='#D8D9E4'/><path d='M1193 139.5l3-3' stroke='#111' stroke-width='2'/><rect x='1189' y='143' width='9' height='3' fill='#333'/><rect x='1229' y='112' width='2' height='40' fill='#8592A6'/><path d='M1267 129h12l-6 6z' fill='#888888'/><rect x='1291' y='112' width='2' height='40' fill='#8592A6'/><path d='M1313 120h9l2 2h13v16h-24z' fill='#D9A551'/><rect x='1326' y='123' width='9' height='1.5' fill='#F0D8A8'/><circle cx='1319' cy='136' r='5' fill='#CFD6E5' stroke='#00539C' stroke-width='2.5'/><path d='M1315 140 L1310 145' stroke='#00539C' stroke-width='3'/><rect x='1355' y='126' width='2' height='6' fill='#1E1E1E'/><rect x='1360' y='126' width='2' height='6' fill='#1E1E1E'/><path d='M1701 130h12l-6 6z' fill='#1B2A4A'/><rect x='1733' y='112' width='2' height='40' fill='#8592A6'/><rect x='1752' y='123' width='26' height='17.5' fill='#D8D9E4'/><rect x='1751' y='118' width='28' height='6' fill='#333'/><rect x='1751' y='124' width='2' height='6.5' fill='#333'/><rect x='1777' y='124' width='2' height='17.7' fill='#333'/><rect x='1769' y='139.5' width='10' height='2.2' fill='#333'/><path d='M1752 132.5v11 M1753 133 L1764 144 M1753 143 L1764 132 M1765 131v14' fill='none' stroke='#68217A' stroke-width='2.2'/><rect x='1764' y='130.5' width='3' height='15' fill='#68217A'/><path d='M1798.5 143.5 L1810 132' stroke='#333' stroke-width='5.5' stroke-linecap='round'/><circle cx='1813.5' cy='127' r='8' fill='#333'/><path d='M1815 125.5 L1824 116.5' stroke='#CFD6E5' stroke-width='5.5'/><rect x='1841' y='126' width='26' height='16' fill='#333'/><path d='M1850 126v-5h8v5' fill='none' stroke='#333' stroke-width='2'/><rect x='1841' y='132' width='26' height='1.5' fill='#CFD6E5'/><rect x='1847' y='131' width='1.5' height='4' fill='#CFD6E5'/><rect x='1859' y='131' width='1.5' height='4' fill='#CFD6E5'/><rect x='1886' y='123' width='26' height='18' fill='#D8D9E4' stroke='#333' stroke-width='2'/><path d='M1890 126 L1895 132 L1890 137' fill='none' stroke='#333' stroke-width='2'/><path d='M1927 128h12l-6 6z' fill='#1B2A4A'/><rect x='1952' y='138' width='12' height='2' fill='#1B2A4A'/><path d='M1952 143h12l-6 6z' fill='#1B2A4A'/><rect x='1976' y='114' width='2' height='2' fill='#46587A'/><rect x='1984' y='114' width='2' height='2' fill='#46587A'/><rect x='1980' y='118' width='2' height='2' fill='#46587A'/><rect x='1976' y='122' width='2' height='2' fill='#46587A'/><rect x='1984' y='122' width='2' height='2' fill='#46587A'/><rect x='1980' y='126' width='2' height='2' fill='#46587A'/><rect x='1976' y='130' width='2' height='2' fill='#46587A'/><rect x='1984' y='130' width='2' height='2' fill='#46587A'/><rect x='1980' y='134' width='2' height='2' fill='#46587A'/><rect x='1976' y='138' width='2' height='2' fill='#46587A'/><rect x='1984' y='138' width='2' height='2' fill='#46587A'/><rect x='1980' y='142' width='2' height='2' fill='#46587A'/><rect x='1976' y='146' width='2' height='2' fill='#46587A'/><rect x='1984' y='146' width='2' height='2' fill='#46587A'/><rect x='2002.5' y='119.5' width='23' height='23' fill='#D8D9E4' stroke='#333' stroke-width='3'/><rect x='2012' y='122.5' width='4.5' height='4.5' fill='none' stroke='#333' stroke-width='1.5'/><path d='M2014 127v4 M2007 135v-4h14v4' fill='none' stroke='#333' stroke-width='1.5'/><rect x='2006' y='135.5' width='4.5' height='4.5' fill='none' stroke='#333' stroke-width='1.5'/><rect x='2018' y='135.5' width='4.5' height='4.5' fill='none' stroke='#333' stroke-width='1.5'/><rect x='2047' y='120' width='6' height='6' fill='#333'/><rect x='2055' y='120' width='6' height='6' fill='#333'/><rect x='2063' y='120' width='6' height='6' fill='#333'/><rect x='2047' y='128' width='6' height='6' fill='#333'/><rect x='2055' y='128' width='6' height='6' fill='#333'/><rect x='2063' y='128' width='6' height='6' fill='#333'/><rect x='2047' y='136' width='6' height='6' fill='#333'/><rect x='2055' y='136' width='6' height='6' fill='#333'/><rect x='2063' y='136' width='6' height='6' fill='#333'/><text x='2086' y='136' font-family='Liberation Sans' font-size='15.5' fill='#333' textLength='29' lengthAdjust='spacingAndGlyphs'>SQL</text><rect x='2133' y='118' width='26' height='26' fill='#A9AEB9'/><rect x='2135' y='120' width='6' height='4' fill='#C9CED8'/><rect x='2143' y='120' width='6' height='4' fill='#C9CED8'/><rect x='2151' y='120' width='6' height='4' fill='#C9CED8'/><rect x='2151' y='126' width='6' height='4' fill='#C9CED8'/><rect x='2143' y='132' width='6' height='4' fill='#C9CED8'/><rect x='2135' y='138' width='6' height='4' fill='#C9CED8'/><rect x='2143' y='138' width='6' height='4' fill='#C9CED8'/><rect x='2173' y='112' width='2' height='40' fill='#8592A6'/><path d='M2336 128h12l-6 6z' fill='#1B2A4A'/><rect x='2363' y='112' width='2' height='40' fill='#8592A6'/><path d='M2381 118 L2391 124 L2381 130Z' fill='#2E8B2E'/><rect x='2394' y='127' width='14' height='11' fill='#D8D9E4' stroke='#333' stroke-width='2'/><rect x='2390' y='132' width='14' height='13' fill='#D8D9E4' stroke='#333' stroke-width='2'/><rect x='2390' y='131' width='14' height='3' fill='#333'/><rect x='2394' y='126' width='14' height='3' fill='#333'/><path d='M2430 124 L2434 129 L2441 118' fill='none' stroke='#333' stroke-width='2'/><text x='2424' y='146' font-family='Liberation Sans' font-size='15.5' fill='#333' textLength='29' lengthAdjust='spacingAndGlyphs'>SQL</text><rect x='2467' y='112' width='2' height='40' fill='#8592A6'/><path d='M2491 119h-5v26h5' fill='none' stroke='#333' stroke-width='2.5'/><path d='M2499 121h-4v8h4 M2499 133h-4v8h4' fill='none' stroke='#333' stroke-width='2.5'/><rect x='2503' y='123' width='10' height='2' fill='#333'/><rect x='2503' y='127' width='10' height='2' fill='#333'/><rect x='2503' y='135' width='10' height='2' fill='#333'/><rect x='2503' y='139' width='10' height='2' fill='#333'/><rect x='2527' y='112' width='2' height='40' fill='#8592A6'/><rect x='2548' y='122' width='25' height='24' fill='#333'/><rect x='2550' y='129.0' width='6' height='3.5' fill='#D8D9E4'/><rect x='2558' y='129.0' width='6' height='3.5' fill='#D8D9E4'/><rect x='2566' y='129.0' width='6' height='3.5' fill='#D8D9E4'/><rect x='2550' y='134.5' width='6' height='3.5' fill='#D8D9E4'/><rect x='2558' y='134.5' width='6' height='3.5' fill='#D8D9E4'/><rect x='2566' y='134.5' width='6' height='3.5' fill='#D8D9E4'/><rect x='2550' y='140.0' width='6' height='3.5' fill='#D8D9E4'/><rect x='2558' y='140.0' width='6' height='3.5' fill='#D8D9E4'/><rect x='2566' y='140.0' width='6' height='3.5' fill='#D8D9E4'/><rect x='2545' y='123' width='12' height='3.5' fill='#388A34'/><rect x='2549.25' y='118.5' width='3.5' height='12' fill='#388A34'/><rect x='2599' y='126' width='19' height='18' fill='#333'/><rect x='2601.0' y='131.0' width='4' height='2.5' fill='#D8D9E4'/><rect x='2606.5' y='131.0' width='4' height='2.5' fill='#D8D9E4'/><rect x='2612.0' y='131.0' width='4' height='2.5' fill='#D8D9E4'/><rect x='2601.0' y='135.3' width='4' height='2.5' fill='#D8D9E4'/><rect x='2606.5' y='135.3' width='4' height='2.5' fill='#D8D9E4'/><rect x='2612.0' y='135.3' width='4' height='2.5' fill='#D8D9E4'/><rect x='2601.0' y='139.6' width='4' height='2.5' fill='#D8D9E4'/><rect x='2606.5' y='139.6' width='4' height='2.5' fill='#D8D9E4'/><rect x='2612.0' y='139.6' width='4' height='2.5' fill='#D8D9E4'/><path d='M2595 118v13 M2588.5 124.5h13 M2590.4 119.9l9.2 9.2 M2599.6 119.9l-9.2 9.2' stroke='#CA7A0B' stroke-width='2'/><rect x='2634' y='138' width='12' height='2' fill='#1B2A4A'/><path d='M2634 143h12l-6 6z' fill='#1B2A4A'/><rect x='24' y='166' width='2' height='2' fill='#46587A'/><rect x='32' y='166' width='2' height='2' fill='#46587A'/><rect x='28' y='170' width='2' height='2' fill='#46587A'/><rect x='24' y='174' width='2' height='2' fill='#46587A'/><rect x='32' y='174' width='2' height='2' fill='#46587A'/><rect x='28' y='178' width='2' height='2' fill='#46587A'/><rect x='24' y='182' width='2' height='2' fill='#46587A'/><rect x='32' y='182' width='2' height='2' fill='#46587A'/><rect x='28' y='186' width='2' height='2' fill='#46587A'/><rect x='24' y='190' width='2' height='2' fill='#46587A'/><rect x='32' y='190' width='2' height='2' fill='#46587A'/><rect x='28' y='194' width='2' height='2' fill='#46587A'/><path d='M55 174v-4a2 2 0 0 1 4 0v4z M63 174v-4a2 2 0 0 1 4 0v4z' fill='#A9AEB9'/><path d='M53 176h16v2h-2v8h-3v10h-4v-10h-3v-8h-2z' fill='#A9AEB9'/><path d='M105 174v-4a2 2 0 0 1 4 0v4z M113 174v-4a2 2 0 0 1 4 0v4z' fill='#A9AEB9'/><path d='M103 176h16v2h-2v8h-3v10h-4v-10h-3v-8h-2z' fill='#A9AEB9'/><path d='M92 170.5 L96 174.5' stroke='#A9AEB9' stroke-width='2.6'/><path d='M95 176 L99 172 L109 182 L105 186Z' fill='#A9AEB9'/><path d='M105 186.5 L109 182.5 L109 186.5Z' fill='#A9AEB9'/><path d='M104.5 176 L110.5 182 L110.5 188' fill='none' stroke='#CFD6E5' stroke-width='1.4'/><rect x='133' y='164' width='2' height='36' fill='#8592A6'/><path d='M455 181h12l-6 6z' fill='#A9AEB9'/><rect x='482' y='164' width='2' height='36' fill='#8592A6'/><path d='M506 171 L520 182 L506 193Z' fill='none' stroke='#B4B9C3' stroke-width='3.5'/><rect x='649' y='174' width='16' height='16' fill='#A9AEB9'/><path d='M690 183 L698 193 L712 171' fill='none' stroke='#A9AEB9' stroke-width='4.5'/><rect x='732' y='169' width='8' height='8' fill='none' stroke='#A9AEB9' stroke-width='2'/><rect x='750' y='169' width='8' height='8' fill='none' stroke='#A9AEB9' stroke-width='2'/><path d='M749 173h-7 M744 170.5l-2.5 2.5 2.5 2.5' fill='none' stroke='#A9AEB9' stroke-width='1.5'/><rect x='732' y='187' width='8' height='8' fill='none' stroke='#A9AEB9' stroke-width='2'/><path d='M736 186v-6 M733.5 182.5l2.5-2.5 2.5 2.5' fill='none' stroke='#A9AEB9' stroke-width='1.5'/><path d='M748 188h12l-6 6z' fill='none' stroke='#A9AEB9' stroke-width='1.5'/><rect x='777' y='168' width='25' height='20' fill='none' stroke='#A9AEB9' stroke-width='2'/><rect x='777' y='168' width='25' height='3' fill='#A9AEB9'/><rect x='774' y='174' width='22' height='21' fill='#CFD6E5' stroke='#A9AEB9' stroke-width='2'/><rect x='774' y='174' width='22' height='3' fill='#A9AEB9'/><rect x='778' y='181' width='12' height='2' fill='#A9AEB9'/><rect x='824' y='169' width='19' height='26' fill='none' stroke='#A9AEB9' stroke-width='2'/><rect x='824' y='182' width='19' height='2' fill='#A9AEB9'/><rect x='827' y='186' width='2' height='2' fill='#A9AEB9'/><rect x='831' y='186' width='9' height='2' fill='#A9AEB9'/><rect x='827' y='190' width='2' height='2' fill='#A9AEB9'/><rect x='831' y='190' width='9' height='2' fill='#A9AEB9'/><rect x='861' y='164' width='2' height='36' fill='#8592A6'/><rect x='880' y='169' width='8' height='8' fill='none' stroke='#A9AEB9' stroke-width='2'/><rect x='898' y='169' width='8' height='8' fill='none' stroke='#A9AEB9' stroke-width='2'/><path d='M897 173h-7 M892 170.5l-2.5 2.5 2.5 2.5' fill='none' stroke='#A9AEB9' stroke-width='1.5'/><rect x='880' y='187' width='8' height='8' fill='none' stroke='#A9AEB9' stroke-width='2'/><path d='M884 186v-6 M881.5 182.5l2.5-2.5 2.5 2.5' fill='none' stroke='#A9AEB9' stroke-width='1.5'/><path d='M896 188h12l-6 6z' fill='none' stroke='#A9AEB9' stroke-width='1.5'/><rect x='924' y='169' width='8' height='8' fill='none' stroke='#A9AEB9' stroke-width='2'/><rect x='942' y='169' width='8' height='8' fill='none' stroke='#A9AEB9' stroke-width='2'/><path d='M941 173h-7 M936 170.5l-2.5 2.5 2.5 2.5' fill='none' stroke='#A9AEB9' stroke-width='1.5'/><rect x='924' y='187' width='8' height='8' fill='none' stroke='#A9AEB9' stroke-width='2'/><path d='M928 186v-6 M925.5 182.5l2.5-2.5 2.5 2.5' fill='none' stroke='#A9AEB9' stroke-width='1.5'/><circle cx='946' cy='189' r='6' fill='#B4B9C3'/><path d='M942.5 189l2.5 3 5-5' fill='none' stroke='#D8D9E4' stroke-width='1.6'/><rect x='968' y='175' width='14' height='21' fill='#A9AEB9'/><rect x='970' y='177' width='10' height='2' fill='#CFD6E5'/><rect x='970' y='181' width='10' height='2' fill='#CFD6E5'/><rect x='978' y='192' width='2' height='2' fill='#CFD6E5'/><path d='M977 171v-2h16v17h-10' fill='none' stroke='#A9AEB9' stroke-width='2'/><path d='M985 174v11 M990 177v8' stroke='#A9AEB9' stroke-width='1.5'/><rect x='1009' y='164' width='2' height='36' fill='#8592A6'/><path d='M1037 186v-17h17v26h-10' fill='none' stroke='#A9AEB9' stroke-width='2'/><rect x='1041' y='175' width='9' height='1.8' fill='#A9AEB9'/><rect x='1041' y='179' width='9' height='1.8' fill='#A9AEB9'/><rect x='1041' y='183' width='9' height='1.8' fill='#A9AEB9'/><rect x='1041' y='187' width='9' height='1.8' fill='#A9AEB9'/><rect x='1041' y='191' width='9' height='1.8' fill='#A9AEB9'/><rect x='1027' y='181' width='18' height='15' fill='#A9AEB9'/><text x='1028.5' y='194' font-family='Liberation Sans' font-weight='bold' font-size='12' fill='#CFD6E5'>01</text><rect x='1079' y='169' width='20' height='26' fill='none' stroke='#A9AEB9' stroke-width='2'/><rect x='1079' y='169' width='20' height='5' fill='#A9AEB9'/><path d='M1079 181h20 M1079 188h20 M1089 174v21' stroke='#A9AEB9' stroke-width='2'/><rect x='1071' y='181' width='18' height='15' fill='#A9AEB9'/><text x='1072.5' y='194' font-family='Liberation Sans' font-weight='bold' font-size='12' fill='#CFD6E5'>01</text><path d='M1125 186v-17h11l6 6v20h-10' fill='none' stroke='#A9AEB9' stroke-width='2'/><rect x='1115' y='181' width='18' height='15' fill='#A9AEB9'/><text x='1116.5' y='194' font-family='Liberation Sans' font-weight='bold' font-size='12' fill='#CFD6E5'>01</text><rect x='1157' y='164' width='2' height='36' fill='#8592A6'/><rect x='1179' y='172' width='4' height='1.8' fill='#A9AEB9'/><rect x='1185' y='172' width='14' height='1.8' fill='#A9AEB9'/><rect x='1185' y='176' width='14' height='1.8' fill='#A9AEB9'/><rect x='1185' y='180' width='14' height='1.8' fill='#A9AEB9'/><rect x='1189' y='184' width='10' height='1.8' fill='#A9AEB9'/><rect x='1183' y='188' width='16' height='1.8' fill='#A9AEB9'/><rect x='1232' y='174' width='11' height='1.8' fill='#A9AEB9'/><rect x='1232' y='178' width='11' height='1.8' fill='#A9AEB9'/><rect x='1232' y='182' width='11' height='1.8' fill='#A9AEB9'/><rect x='1232' y='186' width='11' height='1.8' fill='#A9AEB9'/><rect x='1227' y='190' width='16' height='1.8' fill='#A9AEB9'/><path d='M1224 182 L1229 177 a4 4 0 0 0 -6 -6' fill='none' stroke='#A9AEB9' stroke-width='1.8'/><path d='M1219 170l2 5 4-3z' fill='#A9AEB9'/><rect x='1261' y='164' width='2' height='36' fill='#8592A6'/><rect x='1291' y='170' width='16' height='1.8' fill='#A9AEB9'/><rect x='1291' y='192' width='16' height='1.8' fill='#A9AEB9'/><rect x='1279' y='176' width='8' height='3' fill='#A9AEB9'/><rect x='1279' y='184' width='12' height='3' fill='#A9AEB9'/><path d='M1307 182h-11 M1300 177l-5 5 5 5' fill='none' stroke='#A9AEB9' stroke-width='3'/><rect x='1323' y='170' width='16' height='1.8' fill='#A9AEB9'/><rect x='1323' y='192' width='16' height='1.8' fill='#A9AEB9'/><rect x='1339' y='176' width='8' height='3' fill='#A9AEB9'/><rect x='1335' y='184' width='16' height='3' fill='#A9AEB9'/><path d='M1323 182h11 M1330 177l5 5-5 5' fill='none' stroke='#A9AEB9' stroke-width='3'/><rect x='1365' y='164' width='2' height='36' fill='#8592A6'/><path d='M1383 176h10 M1389 171l5 5-5 5' fill='none' stroke='#A9AEB9' stroke-width='2.5'/><text x='1390' y='193' font-family='Liberation Sans' font-size='22' fill='#B4B9C3'>@</text><rect x='1428' y='186' width='12' height='2' fill='#1B2A4A'/><path d='M1428 191h12l-6 6z' fill='#1B2A4A'/><rect x='1036' y='241' width='6' height='2' fill='#6E5E37'/><rect x='1042' y='235' width='2' height='14' fill='#6E5E37'/><path d='M1044 237h8v10h-8v-4h6v-4h-6z' fill='#6E5E37'/><path d='M1073 234 L1091 250 M1091 234 L1073 250' stroke='#6E5E37' stroke-width='3'/><rect x='2846' y='232' width='16' height='4' fill='#D0D6E2'/><path d='M2846 240h16l-8 8z' fill='#D0D6E2'/><path d='M71 426 L82.3 436 L71 446Z' fill='#404040'/><path d='M82 1039v5.5 M77 1042.5l5 2 5-2 M78.8 1048.5l3.2-4 3.2 4' fill='none' stroke='#464646' stroke-width='2.2'/><rect x='2765' y='347' width='100' height='100' rx='22' fill='#F7F7F7'/><defs><linearGradient id='lg' x1='0' y1='1' x2='1' y2='0'><stop offset='0' stop-color='#98C2F2'/><stop offset='0.55' stop-color='#9EC6F3'/><stop offset='1' stop-color='#BBDAFB'/></linearGradient></defs><rect x='2772' y='353.5' width='86.5' height='86.5' rx='16' fill='url(#lg)'/><path d='M2814 372 L2837 372 L2808 400 a7.5 7.5 0 0 1 -10.6 -10.6Z' fill='#EEF4FC'/><path d='M2793 422 L2816 422 L2836 402 a7.5 7.5 0 0 0 -10.6 -10.6Z' fill='#E2EDFA'/></svg>
</body></html>
